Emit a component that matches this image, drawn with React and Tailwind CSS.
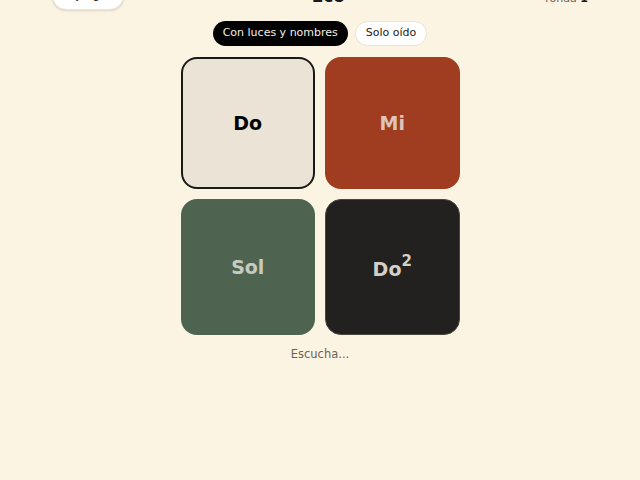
export default function App() {
  const font = { fontFamily: '"DejaVu Sans", sans-serif' };
  return (
    <div className="min-h-screen bg-[#fcf4e3] text-[#1a1a1a] overflow-hidden" style={font}>
      <div className="mx-auto max-w-xl px-5 -mt-[18px]">
        <header className="flex items-center justify-between h-7">
          <button className="h-[28px] px-[11px] rounded-full bg-white border border-[#ece3d2] text-[10.5px] text-[#1a1a1a] flex items-center gap-1 shadow-sm">
            <span>←</span>
            <span>Juegos</span>
          </button>
          <h1 className="text-[17px] font-bold leading-6 pr-[12px]">Eco</h1>
          <div className="text-[11px] text-[#6b6259] mt-[6px]">
            ronda <span className="font-bold text-[#1a1a1a]">1</span>
          </div>
        </header>
        <div className="flex justify-center gap-[7px] mt-[11px]">
          <button className="h-[25px] px-[10px] rounded-full bg-black text-[#f5efe4] text-[11px]">Con luces y nombres</button>
          <button className="h-[25px] px-[10px] rounded-full bg-white border border-[#ece3d2] text-[11px] text-[#1a1a1a]">Solo oído</button>
        </div>
        <div className="mx-auto mt-[11px] grid grid-cols-2 gap-[10px] w-[279px]">
          <div className="h-[132px] rounded-2xl bg-[#ebe3d5] border-2 border-[#1c1a17] flex items-center justify-center text-[19px] font-bold text-black">Do</div>
          <div className="h-[132px] rounded-2xl bg-[#a03c1f] flex items-center justify-center text-[19px] font-bold text-[#dcc5bd]">Mi</div>
          <div className="h-[136px] rounded-2xl bg-[#4e6450] flex items-center justify-center text-[19px] font-bold text-[#c7cbbf]">Sol</div>
          <div className="h-[136px] rounded-2xl bg-[#222120] border border-[#4a453e] flex items-center justify-center text-[19px] font-bold text-[#d6cfc3]">
            <span className="flex items-start leading-none mt-[4px]">Do<span className="text-[15px] leading-none -mt-[6px]">2</span></span>
          </div>
        </div>
        <p className="mt-[11px] text-center text-[11.5px] text-[#6b6259]">Escucha...</p>
      </div>
    </div>
  );
}
